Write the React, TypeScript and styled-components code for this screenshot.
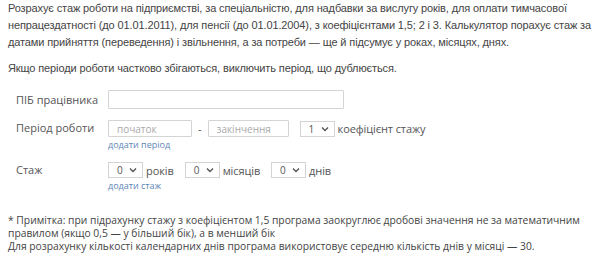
import React from 'react';
import styled, { createGlobalStyle } from 'styled-components';

const GlobalStyle = createGlobalStyle`
  html, body {
    margin: 0;
    padding: 0;
    background: #fff;
  }
`;

const Page = styled.div`
  width: 600px;
  height: 256px;
  padding: 0 8px;
  box-sizing: border-box;
  overflow: hidden;
  color: #444;
`;

const Intro = styled.p<{ $gap?: number }>`
  margin: ${({ $gap }) => ($gap ? `${$gap}px` : '0')} 0 0;
  font-family: 'Liberation Sans', Arial, sans-serif;
  font-size: 11px;
  line-height: 17px;
  letter-spacing: -0.12px;
  white-space: nowrap;
  color: #444;
`;

const Form = styled.div`
  display: flex;
  flex-direction: column;
  gap: 11px;
  margin-top: 13px;
  padding-left: 8px;
  font-family: 'Open Sans', sans-serif;
  font-size: 11px;
  color: #555;
`;

const Row = styled.div`
  display: grid;
  grid-template-columns: 92px 1fr;
  align-items: start;
`;

const Label = styled.div<{ $offset: number }>`
  padding-top: ${({ $offset }) => $offset}px;
  line-height: 14px;
`;

const Field = styled.div`
  display: flex;
  flex-direction: column;
  align-items: flex-start;
`;

const Line = styled.div`
  display: flex;
  align-items: center;
  gap: 3px;
`;

const TextInput = styled.input<{ $w: number; $h: number }>`
  width: ${({ $w }) => $w}px;
  height: ${({ $h }) => $h}px;
  box-sizing: border-box;
  border: 1px solid #d4d4d4;
  border-radius: 1px;
  padding: 0 8px;
  margin: 0;
  font-family: 'Open Sans', sans-serif;
  font-size: 10px;
  color: #444;
  background: #fff;
  outline: none;

  &::placeholder {
    color: #aaa;
  }
`;

const Dash = styled.span`
  margin: 0 3px;
  font-size: 11px;
  color: #555;
`;

const SelectBox = styled.div<{ $gapLeft?: number }>`
  display: flex;
  align-items: center;
  justify-content: space-between;
  width: 35px;
  height: 16px;
  box-sizing: border-box;
  border: 1px solid #d4d4d4;
  padding: 0 5px 0 8px;
  margin-left: ${({ $gapLeft }) => $gapLeft ?? 0}px;
  font-size: 10px;
  color: #555;
  background: #fff;
`;

const Unit = styled.span`
  font-size: 11px;
  letter-spacing: -0.1px;
  color: #555;
  margin-right: 3px;
`;

const AddLink = styled.a`
  margin-top: 2px;
  font-size: 9px;
  line-height: 12px;
  color: #5d86b5;
  text-decoration: none;
  cursor: pointer;
`;

const Note = styled.div`
  margin-top: 22px;
  font-family: 'Open Sans', sans-serif;
  font-size: 10.3px;
  line-height: 13px;
  color: #444;
`;

const Chevron = () => (
  <svg width="8" height="6" viewBox="0 0 8 6">
    <path d="M1 1.5 L4 4.5 L7 1.5" fill="none" stroke="#555" strokeWidth="1.4" />
  </svg>
);

const Select: React.FC<{ value: string; gapLeft?: number }> = ({ value, gapLeft }) => (
  <SelectBox $gapLeft={gapLeft}>
    <span>{value}</span>
    <Chevron />
  </SelectBox>
);

const App: React.FC = () => {
  return (
    <Page>
      <GlobalStyle />
      <Intro>
        Розрахує стаж роботи на підприємстві, за спеціальністю, для надбавки за вислугу років, для оплати тимчасової
        <br />
        непрацездатності (до 01.01.2011), для пенсії (до 01.01.2004), з коефіцієнтами 1,5; 2 і 3. Калькулятор порахує стаж за
        <br />
        датами прийняття (переведення) і звільнення, а за потреби — ще й підсумує у роках, місяцях, днях.
      </Intro>
      <Intro $gap={9}>Якщо періоди роботи частково збігаються, виключить період, що дублюється.</Intro>

      <Form>
        <Row>
          <Label $offset={3}>ПІБ працівника</Label>
          <Field>
            <TextInput $w={236} $h={19} />
          </Field>
        </Row>
        <Row>
          <Label $offset={1}>Період роботи</Label>
          <Field>
            <Line>
              <TextInput $w={84} $h={17} placeholder="початок" />
              <Dash>-</Dash>
              <TextInput $w={81} $h={17} placeholder="закінчення" />
              <Select value="1" gapLeft={8} />
              <Unit>коефіцієнт стажу</Unit>
            </Line>
            <AddLink>додати період</AddLink>
          </Field>
        </Row>
        <Row>
          <Label $offset={1}>Стаж</Label>
          <Field>
            <Line>
              <Select value="0" />
              <Unit>років</Unit>
              <Select value="0" gapLeft={5} />
              <Unit>місяців</Unit>
              <Select value="0" gapLeft={5} />
              <Unit>днів</Unit>
            </Line>
            <AddLink>додати стаж</AddLink>
          </Field>
        </Row>
      </Form>

      <Note>
        * Примітка: при підрахунку стажу з коефіцієнтом 1,5 програма заокруглює дробові значення не за математичним
        <br />
        правилом (якщо 0,5 — у більший бік), а в менший бік
        <br />
        Для розрахунку кількості календарних днів програма використовує середню кількість днів у місяці — 30.
      </Note>
    </Page>
  );
};

export default App;
